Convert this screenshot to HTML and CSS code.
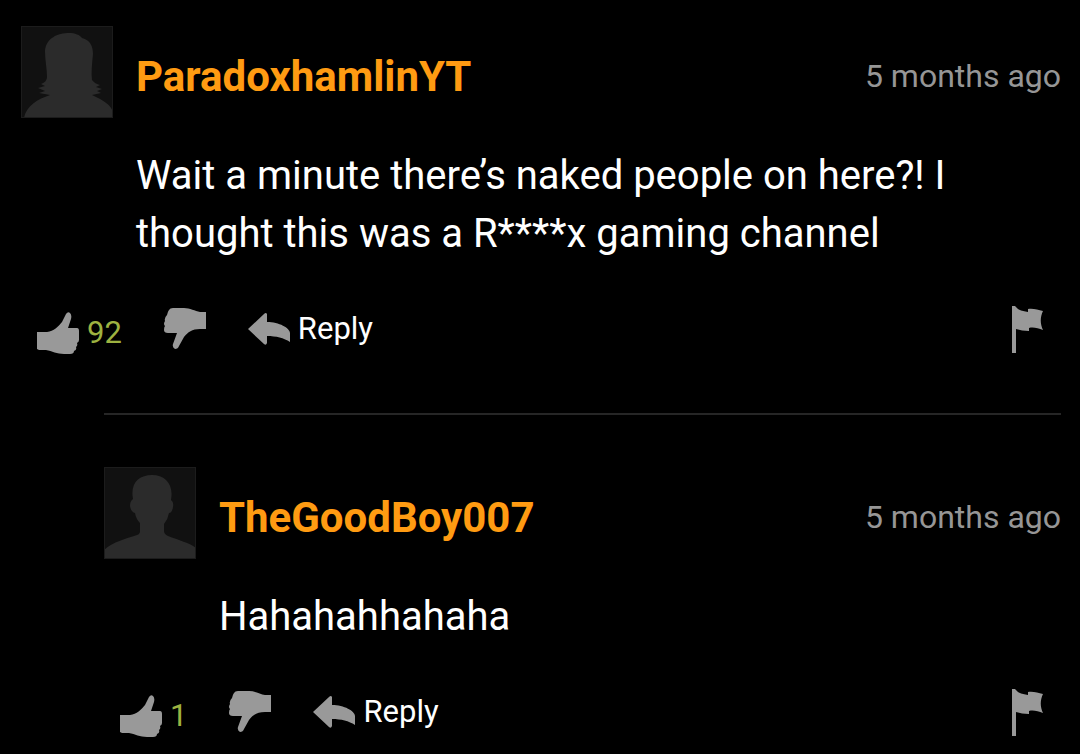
FILE: index.html
```html
<!DOCTYPE html>
<html lang="en">
<head>
  <meta charset="UTF-8" />
  <meta name="viewport" content="width=device-width, initial-scale=1.0"/>
  <title>Comments</title>
  <link rel="stylesheet" href="styles.css">
</head>
<body>

  <!-- Shared icons -->
  <svg class="icon-defs" aria-hidden="true">
    <symbol id="icon-thumb-up" viewBox="0 0 42 42">
      <path d="M0 20 H10 C17 19 21 15 25 10 L29 2 Q31 -1 33 1 Q35 3 34 7 L31 16 H40 Q42 16 42 19 V28 Q42 30 40 31 Q41 34 39 35 Q40 38 37 39 Q37 42 33 42 H27 C20 42 15 39 9 38 H2 L0 37 Z"/>
    </symbol>
    <symbol id="icon-thumb-down" viewBox="0 0 42 42">
      <path d="M42 4 V21 H36 C28 21 24 24 20 29 L15 38 Q14 41 11 41 Q8 39 9 36 L13 25 H4 Q0 25 0 22 Q0 19 1 18 Q-1 16 1 13 Q0 10 3 7 Q4 3 5 2 Q6 0 9 0 H20 C26 0 31 3 36 4 Z"/>
    </symbol>
    <symbol id="icon-reply" viewBox="0 0 42 32">
      <path d="M0 16 L16 1 Q18 -1 19 1 V9 C31 9 42 15 42 20 V29 C36 25 28 23 19 23 V30 Q18 33 16 31 Z"/>
    </symbol>
    <symbol id="icon-flag" viewBox="0 0 32 48">
      <path d="M0 0 H3 C6 4 10 5 16 6 V3 C21 2 26 4 31 5 C28 11 28 18 31 24 C26 22 21 21 17 22 V25 C12 25 8 24 4 23 V47 H0 Z"/>
    </symbol>
  </svg>

  <main class="comments">

    <!-- Comment -->
    <article class="comment">
      <header class="comment-header">
        <svg class="avatar" viewBox="0 0 92 92" role="img" aria-label="ParadoxhamlinYT avatar">
          <path d="M3 92 C5 80 17 73 29 69 L18 67 L24 65 L17 62 L24 60 L20 58 Q26 56 26 51 C26 43 24 34 24 25 C25 12 37 7 48 7 C54 7 59 9 61 12 C69 14 72 20 72 28 C71 38 70 47 71 54 Q74 58 79 59 L75 61 L81 63 L76 65 L80 67 L71 69 C82 74 90 79 92 86 V92 Z"/>
        </svg>
        <a class="username" href="#">ParadoxhamlinYT</a>
        <span class="time">5 months ago</span>
      </header>
      <p class="comment-text">Wait a minute there’s naked people on here?! I thought this was a R****x gaming channel</p>
      <div class="actions">
        <button class="action like" type="button" aria-label="Like">
          <svg class="icon thumb"><use href="#icon-thumb-up"/></svg>
          <span>92</span>
        </button>
        <button class="action dislike" type="button" aria-label="Dislike">
          <svg class="icon thumb"><use href="#icon-thumb-down"/></svg>
        </button>
        <button class="action reply" type="button">
          <svg class="icon arrow"><use href="#icon-reply"/></svg>
          <span>Reply</span>
        </button>
        <button class="action flag" type="button" aria-label="Flag">
          <svg class="icon pennant"><use href="#icon-flag"/></svg>
        </button>
      </div>
    </article>

    <!-- Nested reply -->
    <article class="comment nested">
      <header class="comment-header">
        <svg class="avatar" viewBox="0 0 92 92" role="img" aria-label="TheGoodBoy007 avatar">
          <path d="M0 92 V83 C8 75 24 71 33 68 Q36 67 36 64 V56 Q32 52 31 46 Q27 45 26 39 Q26 34 29 32 C26 16 35 8 48 8 C61 8 70 17 67 33 Q70 35 69 40 Q68 46 65 46 Q64 52 60 57 V64 Q60 67 64 69 C74 73 86 76 92 81 V92 Z"/>
        </svg>
        <a class="username" href="#">TheGoodBoy007</a>
        <span class="time">5 months ago</span>
      </header>
      <p class="comment-text">Hahahahhahaha</p>
      <div class="actions">
        <button class="action like" type="button" aria-label="Like">
          <svg class="icon thumb"><use href="#icon-thumb-up"/></svg>
          <span>1</span>
        </button>
        <button class="action dislike" type="button" aria-label="Dislike">
          <svg class="icon thumb"><use href="#icon-thumb-down"/></svg>
        </button>
        <button class="action reply" type="button">
          <svg class="icon arrow"><use href="#icon-reply"/></svg>
          <span>Reply</span>
        </button>
        <button class="action flag" type="button" aria-label="Flag">
          <svg class="icon pennant"><use href="#icon-flag"/></svg>
        </button>
      </div>
    </article>

  </main>
</body>
</html>
```
FILE: styles.css
```css
body {
  margin: 0;
  font-family: Roboto, sans-serif;
  background-color: #000;
  color: #fff;
}

.icon-defs {
  display: none;
}

.comments {
  padding: 26px 19px 16px 21px;
}

.comment-header {
  display: flex;
  align-items: center;
}

.avatar {
  width: 92px;
  height: 92px;
  flex-shrink: 0;
  background-color: #111;
  outline: 1px solid #1c1c1c;
  outline-offset: -1px;
  fill: #2b2b2b;
}

.username {
  margin-left: 23px;
  padding-top: 10px;
  color: #ff9b12;
  font-size: 42px;
  font-weight: bold;
  line-height: 48px;
  text-decoration: none;
}

.time {
  margin-left: auto;
  padding-top: 8px;
  color: #969696;
  font-size: 32px;
  line-height: 40px;
}

.comment-text {
  margin: 29px 0 43px 115px;
  font-size: 40px;
  line-height: 58px;
}

.actions {
  display: flex;
  align-items: flex-start;
  gap: 42px;
  padding: 0 17px 0 16px;
}

.action {
  display: flex;
  align-items: center;
  gap: 8px;
  padding: 0;
  border: none;
  background: none;
  color: #fff;
  font-family: inherit;
  font-size: 31px;
  line-height: 42px;
  cursor: pointer;
}

.like {
  padding-top: 6px;
  color: #9db240;
}

.dislike,
.reply {
  padding-top: 2px;
}

.flag {
  margin-left: auto;
}

.icon {
  fill: #999;
}

.thumb {
  width: 42px;
  height: 42px;
}

.arrow {
  width: 42px;
  height: 32px;
}

.pennant {
  width: 32px;
  height: 48px;
}

.nested {
  margin: 59px 0 0 83px;
  padding-top: 52px;
  border-top: 2px solid #262626;
}
```
